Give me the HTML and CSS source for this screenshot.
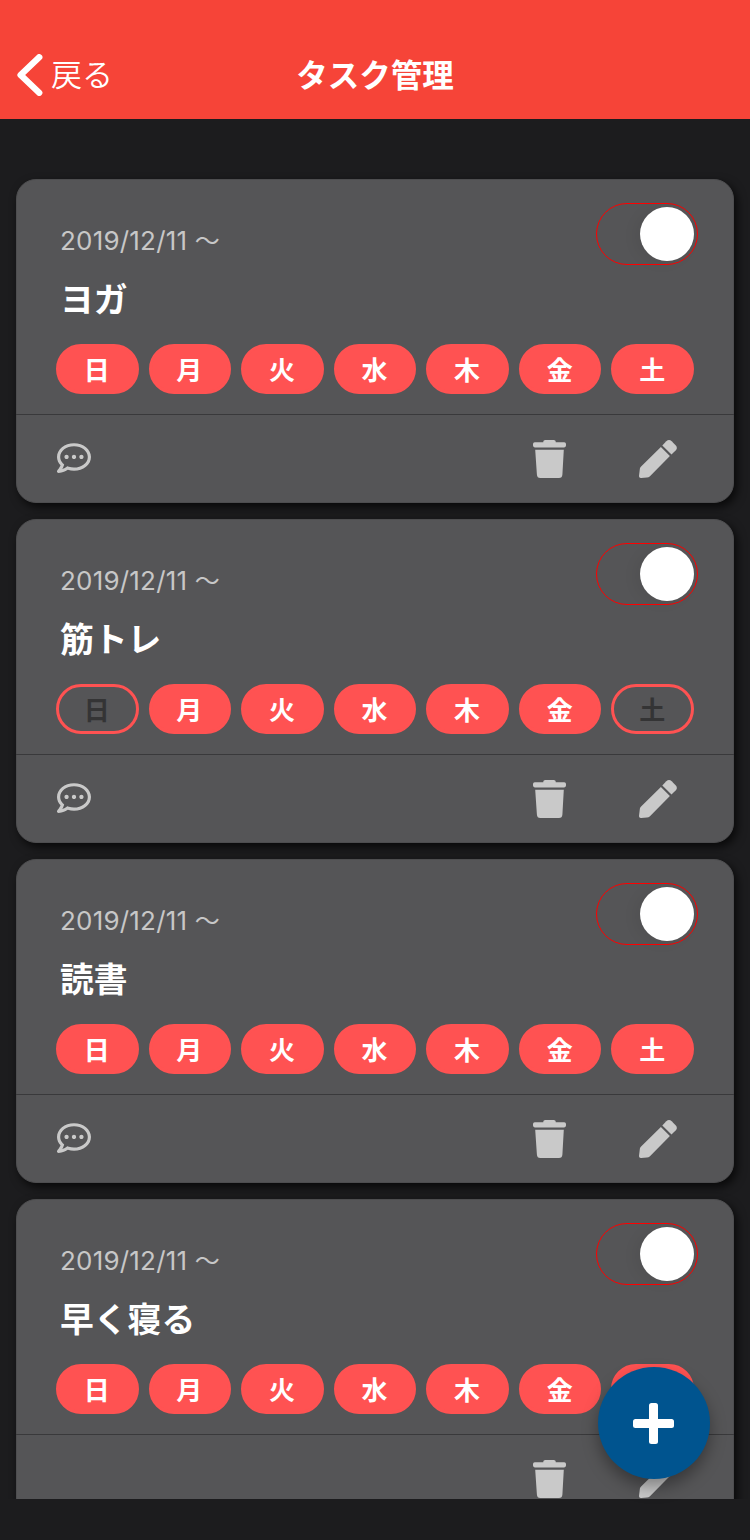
FILE: index.html
```html
<!DOCTYPE html>
<html lang="ja">
<head>
<meta charset="utf-8">
<title>タスク管理</title>
<link rel="stylesheet" href="styles.css">
</head>
<body>
<svg class="defs" aria-hidden="true">
  <symbol id="i-comment" viewBox="0 0 512 512">
    <path d="M144 208c-17.7 0-32 14.3-32 32s14.3 32 32 32 32-14.3 32-32-14.3-32-32-32zm112 0c-17.7 0-32 14.3-32 32s14.3 32 32 32 32-14.3 32-32-14.3-32-32-32zm112 0c-17.7 0-32 14.3-32 32s14.3 32 32 32 32-14.3 32-32-14.3-32-32-32zM256 32C114.6 32 0 125.1 0 240c0 47.6 19.9 91.2 52.9 126.3C38 405.7 7 439.1 6.5 439.5c-6.6 7-8.4 17.2-4.6 26S14.4 480 24 480c61.5 0 110-25.7 139.1-46.3C192 442.8 223.2 448 256 448c141.4 0 256-93.1 256-208S397.4 32 256 32zm0 368c-26.7 0-53.1-4.1-78.4-12.1l-22.7-7.2-19.5 13.8c-14.3 10.1-33.9 21.4-57.5 29 7.3-12.1 14.4-25.7 19.9-40.2l10.6-28.1-20.6-21.8C69.7 314.1 48 282.2 48 240c0-88.2 93.3-160 208-160s208 71.8 208 160-93.3 160-208 160z"/>
  </symbol>
  <symbol id="i-trash" viewBox="0 0 33 38">
    <path d="M10.3 2.3V1.6Q10.3 0 12.2 0H20.800Q22.700 0 22.700 1.600V2.300H31.200Q33 2.300 33 4.100V5.600Q33 7.400 31.200 7.400H1.800Q0 7.400 0 5.600V4.100Q0 2.300 1.800 2.300Z"/>
    <path d="M2.200 9.700H30.800L29.400 34.500Q29.200 38 26 38H7.300Q4.100 38 3.900 34.500Z"/>
  </symbol>
  <symbol id="i-pencil" viewBox="0 0 38 38">
    <path d="M21.900 6.900L30.900 15.900L10.700 36.500Q9.600 37.500 8 37.600L2.100 38Q-.1 38.100 0 36L.9 28.600Q1.100 27.300 2.100 26.400Z"/>
    <path d="M23.300 5.400L27.300 1.300Q30 -1.200 32.700 1.300L36.600 5.200Q39.100 7.900 36.600 10.500L32.500 14.600Z"/>
  </symbol>
</svg>

<div class="app">
  <header class="header">
    <a class="back">
      <svg class="chevron" viewBox="0 0 26 42"><path d="M22.200 3.300L3.600 21L22.200 38.700"/></svg>
      <span class="back-label">戻る</span>
    </a>
    <h1 class="heading">タスク管理</h1>
  </header>

  <main class="list">
    <section class="card">
      <div class="body">
        <div class="info"><p class="date">2019/12/11 <span class="wave">〜</span></p><h2 class="title">ヨガ</h2></div>
        <div class="toggle"><span class="knob"></span></div>
        <div class="days"><span class="day">日</span><span class="day">月</span><span class="day">火</span><span class="day">水</span><span class="day">木</span><span class="day">金</span><span class="day">土</span></div>
      </div>
      <div class="actions"><svg class="comment"><use href="#i-comment"/></svg><svg class="trash"><use href="#i-trash"/></svg><svg class="pencil"><use href="#i-pencil"/></svg></div>
    </section>

    <section class="card">
      <div class="body">
        <div class="info"><p class="date">2019/12/11 <span class="wave">〜</span></p><h2 class="title">筋トレ</h2></div>
        <div class="toggle"><span class="knob"></span></div>
        <div class="days"><span class="day off">日</span><span class="day">月</span><span class="day">火</span><span class="day">水</span><span class="day">木</span><span class="day">金</span><span class="day off">土</span></div>
      </div>
      <div class="actions"><svg class="comment"><use href="#i-comment"/></svg><svg class="trash"><use href="#i-trash"/></svg><svg class="pencil"><use href="#i-pencil"/></svg></div>
    </section>

    <section class="card">
      <div class="body">
        <div class="info"><p class="date">2019/12/11 <span class="wave">〜</span></p><h2 class="title">読書</h2></div>
        <div class="toggle"><span class="knob"></span></div>
        <div class="days"><span class="day">日</span><span class="day">月</span><span class="day">火</span><span class="day">水</span><span class="day">木</span><span class="day">金</span><span class="day">土</span></div>
      </div>
      <div class="actions"><svg class="comment"><use href="#i-comment"/></svg><svg class="trash"><use href="#i-trash"/></svg><svg class="pencil"><use href="#i-pencil"/></svg></div>
    </section>

    <section class="card">
      <div class="body">
        <div class="info"><p class="date">2019/12/11 <span class="wave">〜</span></p><h2 class="title">早く寝る</h2></div>
        <div class="toggle"><span class="knob"></span></div>
        <div class="days"><span class="day">日</span><span class="day">月</span><span class="day">火</span><span class="day">水</span><span class="day">木</span><span class="day">金</span><span class="day"></span></div>
      </div>
      <div class="actions"><svg class="trash"><use href="#i-trash"/></svg><svg class="pencil"><use href="#i-pencil"/></svg></div>
    </section>
  </main>

  <button class="fab" aria-label="追加"><svg viewBox="0 0 41 41"><rect x="16" y="0" width="9" height="41" rx="2.500"/><rect x="0" y="16" width="41" height="9" rx="2.500"/></svg></button>
</div>
</body>
</html>
```
FILE: styles.css
```css
* { box-sizing: border-box; }

body {
  margin: 0;
  background: #1c1c1e;
  color: #fff;
  font-family: Inter, "Noto Sans CJK JP", sans-serif;
}

.defs { display: none; }

.app {
  position: relative;
  display: flex;
  flex-direction: column;
  width: 750px;
  height: 1540px;
  overflow: hidden;
}

.header {
  display: grid;
  grid-template-columns: 1fr auto 1fr;
  align-items: center;
  height: 119px;
  padding: 30px 17px 0;
  background: #f64438;
  flex: none;
}

.back {
  display: flex;
  align-items: center;
  gap: 8px;
  font-family: "Noto Sans CJK JP DemiLight", "Noto Sans CJK JP Light", "Noto Sans CJK JP", sans-serif;
  font-size: 31px;
  font-weight: 300;
  line-height: 42px;
}

.back-label { padding-bottom: 3px; }

.chevron {
  width: 26px;
  height: 42px;
  fill: none;
  stroke: #fff;
  stroke-width: 6.400;
  stroke-linecap: round;
  stroke-linejoin: round;
}

.heading {
  margin: 0;
  padding-top: 3px;
  font-size: 31.500px;
  font-weight: 700;
  line-height: 42px;
}

.list {
  display: flex;
  flex-direction: column;
  gap: 16px;
  height: 1380px;
  padding: 60px 16px 0;
  overflow: hidden;
}

.card {
  flex: none;
  height: 324px;
  border: 1px solid #4d4d4f;
  border-radius: 20px;
  background: #555557;
  box-shadow: 3px 4px 10px rgba(0, 0, 0, .7);
}

.body {
  display: grid;
  grid-template-columns: 1fr auto;
  grid-template-rows: 141px 50px;
  height: 235px;
  margin: 0 -1px;
  padding: 23px 40px 20px;
  border-bottom: 1px solid #39393b;
}

.info { padding: 20px 0 0 4px; }

.date {
  margin: 0;
  color: #c7c7c7;
  font-size: 26px;
  letter-spacing: .2px;
  line-height: 36px;
}

.wave { font-size: 25px; }

.title {
  margin: 19px 0 0;
  font-size: 33.800px;
  font-weight: 700;
  line-height: 44px;
}

.toggle {
  display: flex;
  justify-content: flex-end;
  width: 102px;
  height: 62px;
  margin-right: -4px;
  padding: 3px;
  border: 1px solid #f00;
  border-radius: 31px;
}

.knob {
  width: 54px;
  height: 54px;
  border-radius: 50%;
  background: #fff;
  box-shadow: -5px 2px 14px rgba(0, 0, 0, .06);
}

.days {
  display: grid;
  grid-column: 1 / -1;
  grid-template-columns: repeat(7, 1fr);
  gap: 10px;
}

.day {
  display: flex;
  align-items: center;
  justify-content: center;
  height: 50px;
  padding: 3px 1px 0 0;
  border: 3px solid #ff5252;
  border-radius: 25px;
  background: #ff5252;
  font-size: 26px;
  font-weight: 700;
  line-height: 42px;
}

.day.off {
  background: transparent;
  color: #343435;
}

.actions {
  display: flex;
  align-items: center;
  height: 87px;
  padding: 0 56px 0 40px;
  fill: #c9c9c9;
}

.comment {
  width: 34px;
  height: 34px;
  margin-bottom: 1px;
}

.trash {
  width: 33px;
  height: 38px;
  margin-left: auto;
}

.pencil {
  width: 38px;
  height: 38px;
  margin-left: 73px;
}

.fab {
  position: absolute;
  left: 598px;
  top: 1367px;
  display: grid;
  place-items: center;
  width: 112px;
  height: 112px;
  padding: 0;
  border: 0;
  border-radius: 50%;
  background: #00548f;
  box-shadow: 0 8px 16px rgba(0, 0, 0, .35);
}

.fab svg {
  width: 41px;
  height: 41px;
  margin-right: 1px;
  fill: #fff;
}
```
